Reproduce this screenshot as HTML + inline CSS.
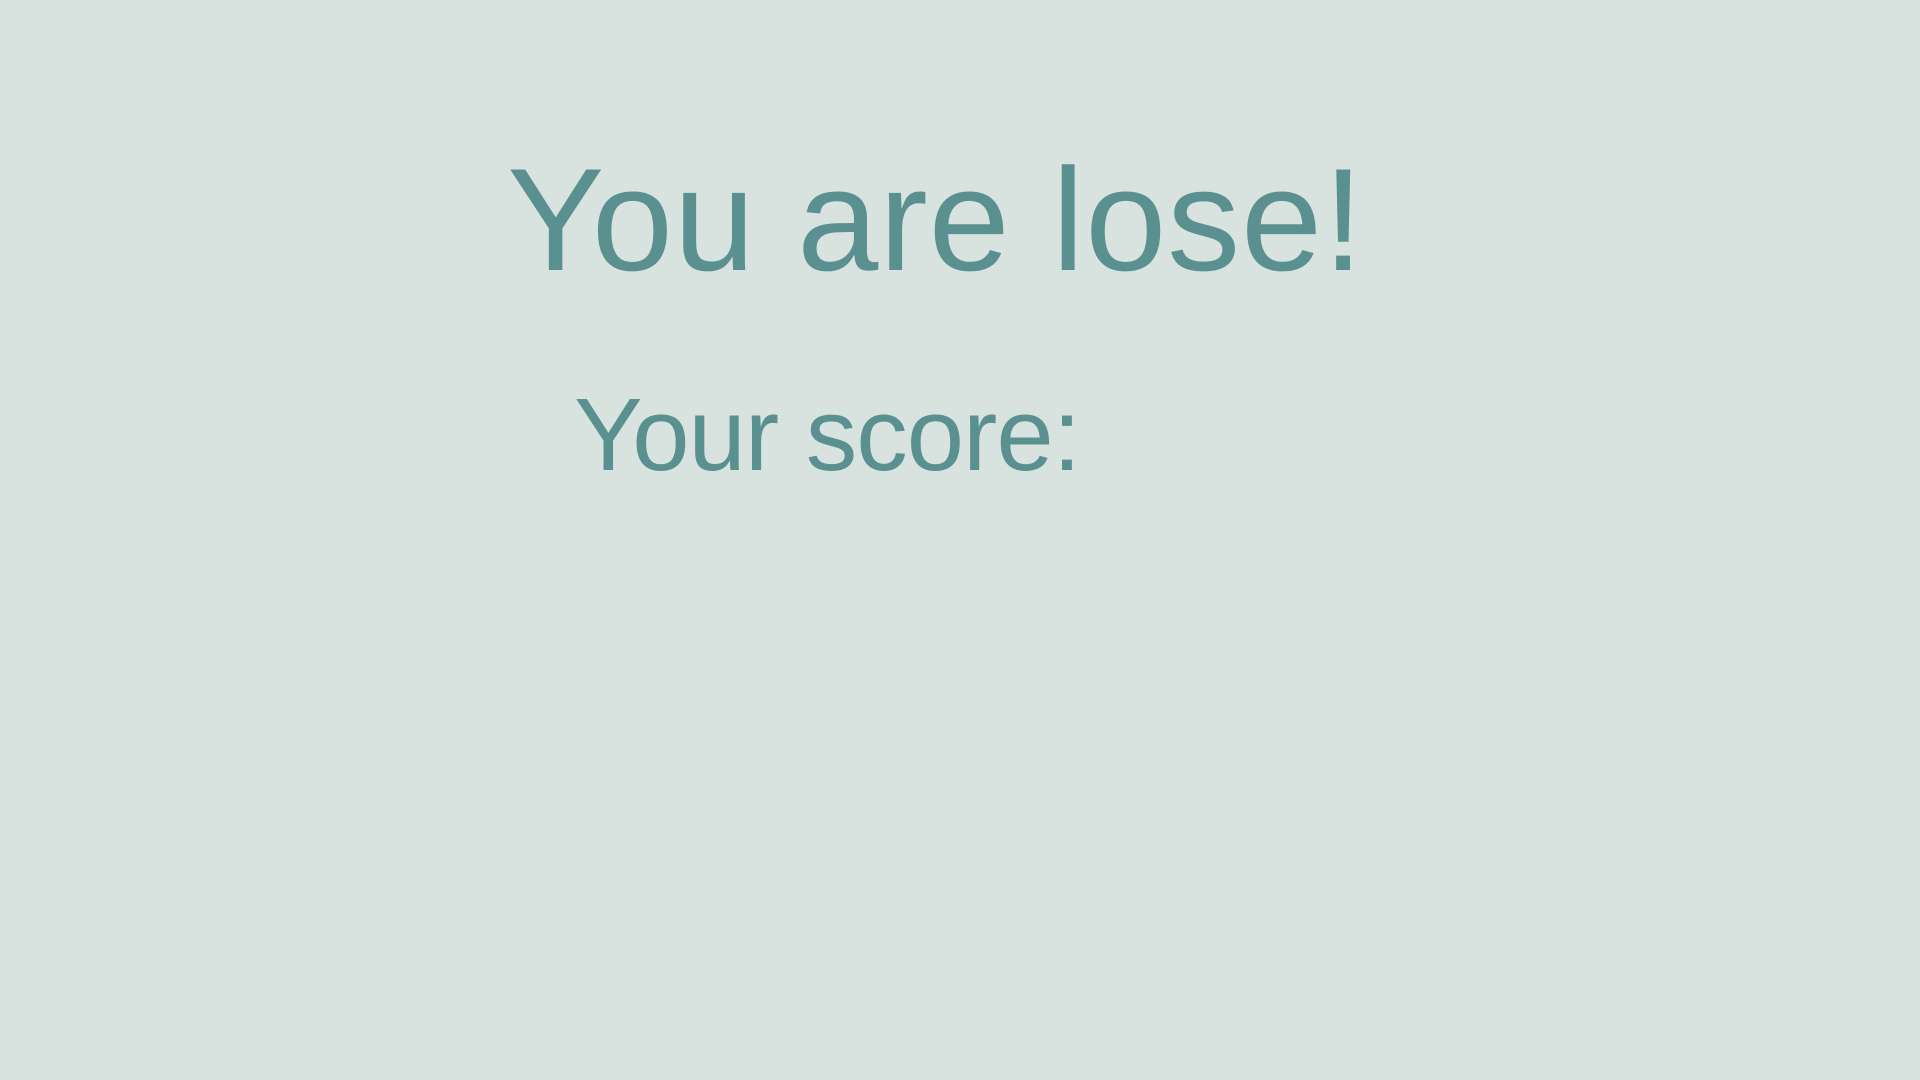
<!DOCTYPE html>
<html><head><style>
html,body{margin:0;padding:0;width:1920px;height:1080px;background:#d8e3df;overflow:hidden}
div{position:absolute;font-family:"Liberation Sans",sans-serif;color:#5b9090;line-height:1;white-space:nowrap}
#t{left:507px;top:147px;font-size:146px;letter-spacing:0.8px}
#s{left:574px;top:383px;font-size:103px;letter-spacing:-1px}
</style></head><body>
<div id="t">You are lose!</div>
<div id="s">Your score:</div>
</body></html>
